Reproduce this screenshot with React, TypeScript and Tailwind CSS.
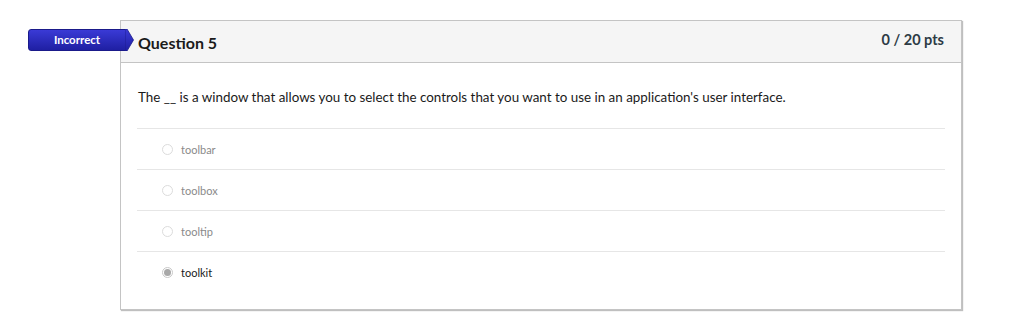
import React from "react";

const options = [
  { label: "toolbar", selected: false },
  { label: "toolbox", selected: false },
  { label: "tooltip", selected: false },
  { label: "toolkit", selected: true },
];

export default function App() {
  return (
    <div
      className="w-[1024px] h-[333px] bg-white relative"
      style={{ fontFamily: "Lato, 'Open Sans', sans-serif" }}
    >
      <div className="pt-[20px] pl-[120px]">
        <div className="w-[842px] border border-[#c4c4c4] shadow-[1px_1px_1px_rgba(0,0,0,0.25)] bg-white relative">
          {/* Incorrect badge */}
          <div className="absolute left-[-93px] top-[8px] flex items-center">
            <div className="w-[98px] h-[22px] rounded-l-[3px] bg-gradient-to-b from-[#3a3ad6] to-[#1f1fa3] border border-[#1a1a8a] flex items-center justify-center text-white text-[11.5px] font-bold leading-none">
              Incorrect
            </div>
            <svg width="9" height="22" viewBox="0 0 9 22" className="-ml-[1px]">
              <defs>
                <linearGradient id="g" x1="0" y1="0" x2="0" y2="1">
                  <stop offset="0" stopColor="#3a3ad6" />
                  <stop offset="1" stopColor="#1f1fa3" />
                </linearGradient>
              </defs>
              <polygon points="0,0 2,0 8.5,11 2,22 0,22" fill="url(#g)" stroke="#1a1a8a" strokeWidth="0.8" />
            </svg>
          </div>

          {/* Header */}
          <div className="h-[42px] bg-[#f5f5f5] border-b border-[#c4c4c4] flex items-start justify-between pl-[17px] pr-[17px]">
            <div className="text-[16px] font-bold text-[#1a1a1a] mt-[12px] leading-[20px]">Question 5</div>
            <div className="text-[14.5px] font-bold text-[#2d3b45] mt-[9px] leading-[20px]">0 / 20 pts</div>
          </div>

          {/* Body */}
          <div className="px-[16px] pb-[17px]">
            <div className="text-[13.4px] text-[#1a1a1a] leading-[20px] pt-[24px] pb-[21px] pl-[1px]">
              The __ is a window that allows you to select the controls that you want to use in an application's user interface.
            </div>
            {options.map((o) => (
              <div
                key={o.label}
                className="h-[41px] border-t border-[#e6e6e6] flex items-center pl-[25px]"
              >
                {o.selected ? (
                  <span className="w-[11px] h-[11px] rounded-full border border-[#c8c8c8] bg-white flex items-center justify-center">
                    <span className="w-[7px] h-[7px] rounded-full bg-[#a8a8a8]" />
                  </span>
                ) : (
                  <span className="w-[11px] h-[11px] rounded-full border border-[#dcdcdc] bg-white" />
                )}
                <span
                  className={
                    "ml-[8px] text-[11px] leading-none " +
                    (o.selected ? "text-[#1a1a1a]" : "text-[#8a8a8a]")
                  }
                >
                  {o.label}
                </span>
              </div>
            ))}
          </div>
        </div>
      </div>
    </div>
  );
}
